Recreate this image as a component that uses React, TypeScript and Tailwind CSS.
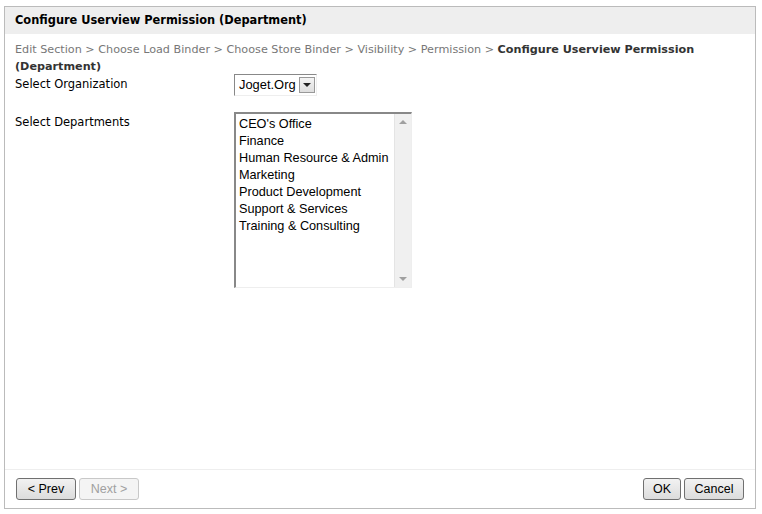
import React from "react";

const departments = [
  "CEO's Office",
  "Finance",
  "Human Resource & Admin",
  "Marketing",
  "Product Development",
  "Support & Services",
  "Training & Consulting",
];

const Btn = ({ label, disabled, w }: { label: string; disabled?: boolean; w: string }) => (
  <button
    className={
      (disabled
        ? "h-[22px] rounded-[3px] border border-[#c8c8c8] bg-[#f4f4f4] text-[#a0a0a0] text-[12.5px] "
        : "h-[22px] rounded-[3px] border border-[#707070] bg-gradient-to-b from-[#f2f2f2] to-[#dcdcdc] text-black text-[12.5px] ") + w
    }
    style={{ fontFamily: '"Liberation Sans", Arial, sans-serif' }}
  >
    {label}
  </button>
);

export default function App() {
  return (
    <div
      className="w-[762px] h-[514px] bg-white pt-[6px] pl-[4px] text-[#222]"
      style={{ fontFamily: '"DejaVu Sans", Verdana, sans-serif' }}
    >
      <div className="w-[752px] h-[503px] border border-[#bbbbbb] flex flex-col">
        {/* Header */}
        <div className="h-[27px] bg-[#eeeeee] flex items-center pl-[10px] text-[11.4px] font-bold text-black">
          Configure Userview Permission (Department)
        </div>

        {/* Body */}
        <div className="flex-1 px-[10px] pt-[7px]">
          <div className="text-[11.2px] leading-[17px] text-[#777]">
            Edit Section &gt; Choose Load Binder &gt; Choose Store Binder &gt; Visibility &gt; Permission &gt;{" "}
            <span className="font-bold text-[#333]">Configure Userview Permission (Department)</span>
          </div>

          <div className="flex">
            <div className="w-[219px] text-[11.5px] text-black pt-[1px]">Select Organization</div>
            <div className="-mt-[1px] h-[22px] flex items-center border border-t-[#888] border-l-[#888] border-r-[#eee] border-b-[#eee] pl-[4px] pr-[1px] gap-[3px]">
              <span
                className="text-[12.9px] text-black"
                style={{ fontFamily: '"Liberation Sans", Arial, sans-serif' }}
              >
                Joget.Org
              </span>
              <span className="w-[16px] h-[16px] border border-[#999] bg-gradient-to-b from-[#f4f4f4] to-[#dedede] flex items-center justify-center">
                <span className="w-0 h-0 border-l-[4px] border-r-[4px] border-t-[4px] border-l-transparent border-r-transparent border-t-[#222]" />
              </span>
            </div>
          </div>

          <div className="flex mt-[16px]">
            <div className="w-[219px] text-[11.5px] text-black pt-[2px]">Select Departments</div>
            <div className="w-[178px] h-[176px] flex border-t-2 border-l-2 border-t-[#888] border-l-[#888] border-r border-b border-r-[#eee] border-b-[#eee]">
              <div
                className="flex-1 pl-[3px] pt-[2px] text-[12.7px] leading-[17px] text-black whitespace-nowrap"
                style={{ fontFamily: '"Liberation Sans", Arial, sans-serif' }}
              >
                {departments.map((d) => (
                  <div key={d}>{d}</div>
                ))}
              </div>
              <div className="w-[17px] bg-[#f0f0f0] border-l border-[#e4e4e4] flex flex-col justify-between items-center py-[6px]">
                <span className="w-0 h-0 border-l-[4px] border-r-[4px] border-b-[4px] border-l-transparent border-r-transparent border-b-[#a0a0a0]" />
                <span className="w-0 h-0 border-l-[4px] border-r-[4px] border-t-[4px] border-l-transparent border-r-transparent border-t-[#a0a0a0]" />
              </div>
            </div>
          </div>
        </div>

        {/* Footer */}
        <div className="h-[39px] border-t border-[#eeeeee] flex items-center justify-between px-[11px]">
          <div className="flex gap-[3px]">
            <Btn label="< Prev" w="w-[60px]" />
            <Btn label="Next >" disabled w="w-[60px]" />
          </div>
          <div className="flex gap-[3px]">
            <Btn label="OK" w="w-[38px]" />
            <Btn label="Cancel" w="w-[60px]" />
          </div>
        </div>
      </div>
    </div>
  );
}
